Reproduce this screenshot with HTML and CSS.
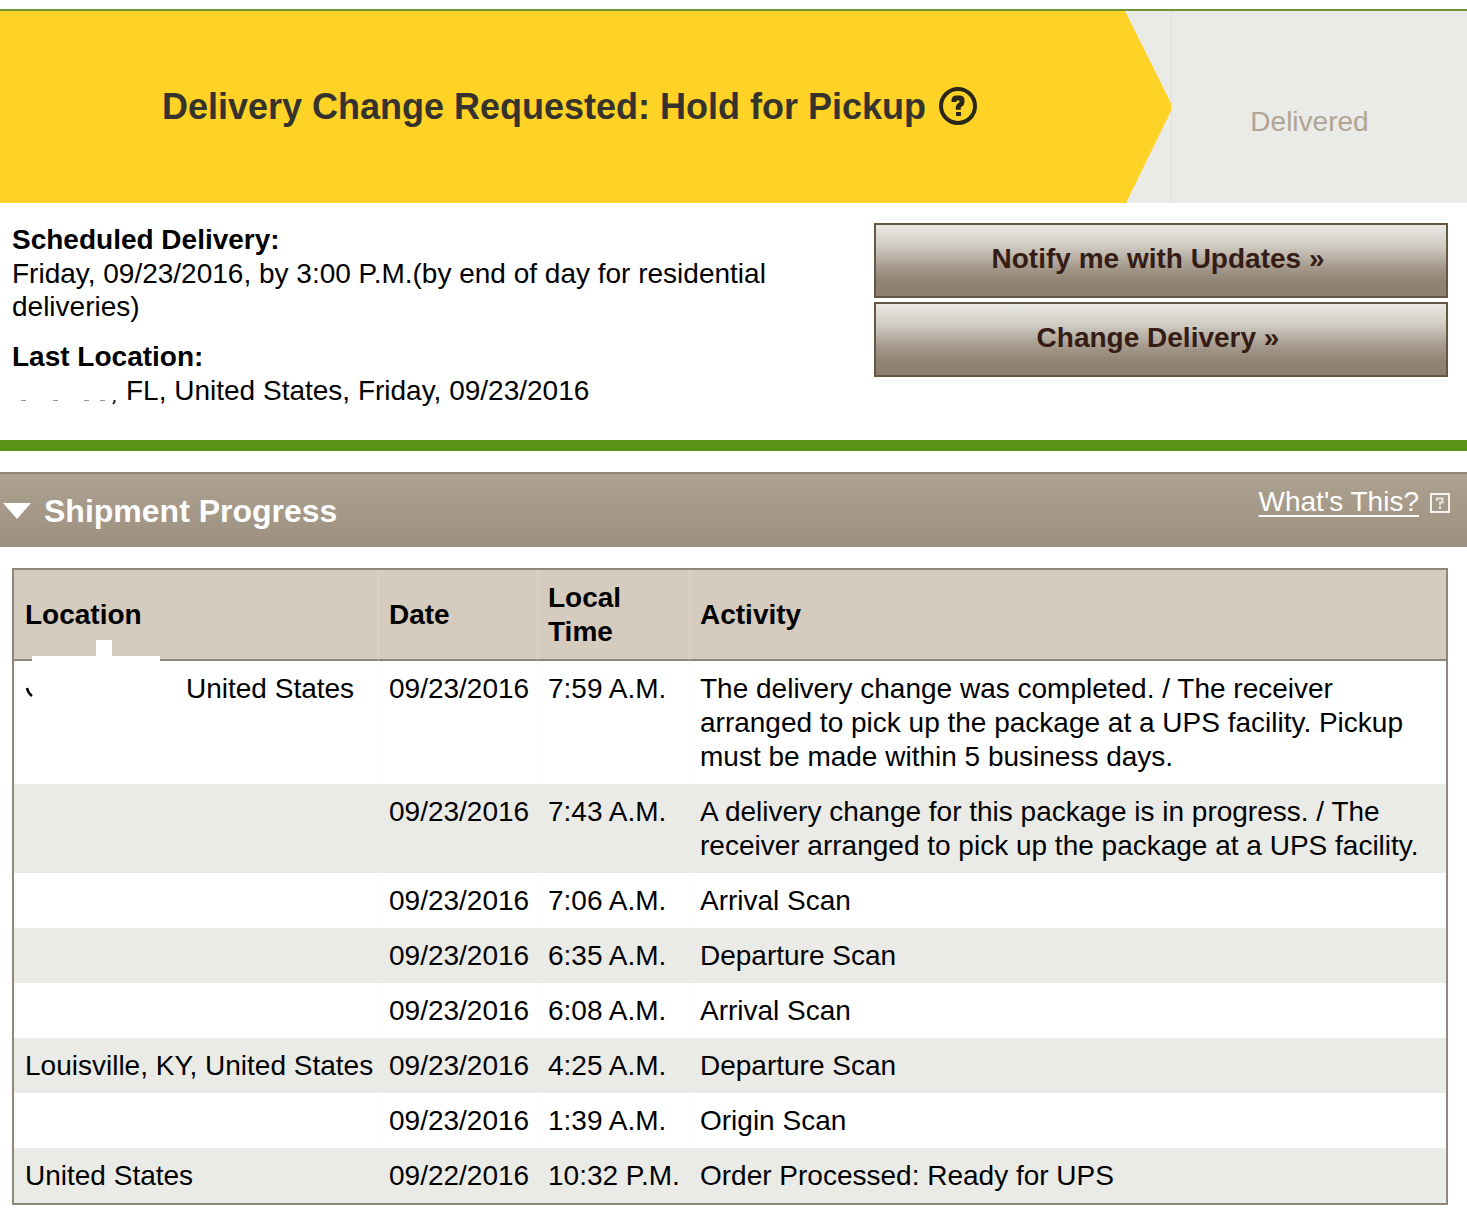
FILE: index.html
```html
<!DOCTYPE html>
<html lang="en">
<head>
<meta charset="utf-8">
<meta name="viewport" content="width=device-width, initial-scale=1">
<title>Tracking Detail</title>
<link rel="stylesheet" href="styles.css">
</head>
<body>
<main>
  <section class="status">
    <div class="status-current">
      <h1 class="status-title">Delivery Change Requested: Hold for Pickup</h1>
      <button class="help" type="button" aria-label="Help">
        <svg viewBox="0 0 38 38" width="38" height="38" aria-hidden="true">
          <circle cx="19" cy="19" r="17" fill="none" stroke="#2b2718" stroke-width="4"/>
          <path d="M15 15v-1.500q0-2.500 2.500-2.500h3q2.500 0 2.500 2.500v1.500q0 1.500-1.500 2.500l-1 .8q-1.200.8-1.200 2v2.500" fill="none" stroke="#2b2718" stroke-width="5"/>
          <rect x="17" y="25" width="5" height="4" fill="#2b2718"/>
        </svg>
      </button>
    </div>
    <div class="status-next">Delivered</div>
  </section>

  <section class="summary">
    <dl class="facts">
      <dt>Scheduled Delivery:</dt>
      <dd>Friday, 09/23/2016, by 3:00 P.M.(by end of day for residential deliveries)</dd>
      <dt>Last Location:</dt>
      <dd class="last-location">
        <svg class="city" viewBox="0 0 114 33" width="114" height="33" aria-hidden="true">
          <path d="M9 26.500h5M41 26.500h5M72 26.500h5M88 26.500h5" stroke="#999" stroke-width="1"/>
          <path d="M102.500 26v2l-1.500 2" fill="none" stroke="#222" stroke-width="2"/>
        </svg>
        <span>FL, United States, Friday, 09/23/2016</span>
      </dd>
    </dl>
    <div class="actions">
      <button class="action" type="button">Notify me with Updates »</button>
      <button class="action" type="button">Change Delivery »</button>
    </div>
  </section>

  <section class="progress">
    <header class="progress-bar">
      <svg class="caret" viewBox="0 0 30 16" width="30" height="16" aria-hidden="true"><path d="M1 0h28L15 16z" fill="#fff"/></svg>
      <h2 class="progress-title">Shipment Progress</h2>
      <a class="whats-this" href="#">What's This?</a>
      <svg class="hint" viewBox="0 0 20 20" width="20" height="20" aria-hidden="true">
        <rect x="1" y="1" width="18" height="18" fill="none" stroke="#f5f2ee" stroke-width="2"/>
        <path d="M7 8V5.500h5.500v4H10V12" fill="none" stroke="#e8e3dc" stroke-width="2"/>
        <rect x="9" y="13" width="2" height="3" fill="#e8e3dc"/>
      </svg>
    </header>

    <div class="table-wrap">
      <table class="scans">
        <colgroup><col class="col-location"><col class="col-date"><col class="col-time"><col></colgroup>
        <thead>
          <tr><th scope="col">Location</th><th scope="col">Date</th><th scope="col">Local Time</th><th scope="col">Activity</th></tr>
        </thead>
        <tbody>
          <tr>
            <td class="masked">
              <svg class="mask" viewBox="0 0 136 64" width="136" height="64" aria-hidden="true">
                <path d="M72 0h16v16h48v48H8V16h64z" fill="#fff"/>
                <path d="M3 48q1 5 5 8" fill="none" stroke="#000" stroke-width="2.500"/>
              </svg>
              <span>United States</span>
            </td>
            <td>09/23/2016</td><td>7:59 A.M.</td>
            <td>The delivery change was completed. / The receiver arranged to pick up the package at a UPS facility. Pickup must be made within 5 business days.</td>
          </tr>
          <tr><td></td><td>09/23/2016</td><td>7:43 A.M.</td><td>A delivery change for this package is in progress. / The receiver arranged to pick up the package at a UPS facility.</td></tr>
          <tr><td></td><td>09/23/2016</td><td>7:06 A.M.</td><td>Arrival Scan</td></tr>
          <tr><td></td><td>09/23/2016</td><td>6:35 A.M.</td><td>Departure Scan</td></tr>
          <tr><td></td><td>09/23/2016</td><td>6:08 A.M.</td><td>Arrival Scan</td></tr>
          <tr><td>Louisville, KY, United States</td><td>09/23/2016</td><td>4:25 A.M.</td><td>Departure Scan</td></tr>
          <tr><td></td><td>09/23/2016</td><td>1:39 A.M.</td><td>Origin Scan</td></tr>
          <tr><td>United States</td><td>09/22/2016</td><td>10:32 P.M.</td><td>Order Processed: Ready for UPS</td></tr>
        </tbody>
      </table>
    </div>
  </section>
</main>
</body>
</html>
```
FILE: styles.css
```css
* { box-sizing: border-box; }

body {
  margin: 0;
  padding: 9px 0 14px;
  background: #fff;
  color: #000;
  font: 28px/34px "Liberation Sans", Arial, sans-serif;
}

h1, h2, dl, dd { margin: 0; }

button {
  font: inherit;
  cursor: pointer;
}

/* Status banner */
.status {
  display: grid;
  grid-template-columns: 1fr 296px;
  border-top: 2px solid #6f9636;
  background: #eaeae6;
}

.status-current {
  display: flex;
  align-items: center;
  justify-content: center;
  gap: 13px;
  min-height: 192px;
  padding-right: 32px;
  background: #ffd226;
  clip-path: polygon(0 0, calc(100% - 46px) 0, 100% 48%, 100% 52%, calc(100% - 45px) 100%, 0 100%);
}

.status-title {
  color: #35332b;
  font-size: 36px;
  line-height: 44px;
}

.help {
  display: flex;
  padding: 0 0 2px;
  border: 0;
  background: none;
}

.status-next {
  display: flex;
  align-items: center;
  justify-content: center;
  padding: 30px 20px 0 0;
  border-left: 1px solid #f3dfa4;
  color: #b0a494;
}

/* Delivery summary */
.summary {
  display: grid;
  grid-template-columns: 1fr 574px;
  gap: 100px;
  padding: 20px 19px 33px 12px;
  border-bottom: 11px solid #5a9216;
}

.facts { line-height: 33px; }
.facts dt {
  font-weight: bold;
  line-height: 34px;
}
.facts dd + dt { margin-top: 17px; }

.last-location { display: flex; }

.city { flex: none; }

.actions {
  display: flex;
  flex-direction: column;
  gap: 4px;
}

.action {
  height: 75px;
  padding: 0 6px 4px 0;
  border: 2px solid #665744;
  border-radius: 0;
  background: linear-gradient(#e9e8e2, #d2cec6 28%, #a4998c 60%, #918474 80%, #8d7e70);
  color: #351c15;
  font-weight: bold;
}

/* Shipment progress */
.progress-bar {
  display: flex;
  align-items: center;
  height: 75px;
  margin-top: 21px;
  padding: 0 17px 0 2px;
  border-top: 2px solid #8f8578;
  background: linear-gradient(#ada190, #9d9080);
  color: #fff;
}

.progress-title {
  flex: 1;
  margin-left: 12px;
  font-size: 32px;
  line-height: 36px;
}

.whats-this {
  padding-bottom: 18px;
  color: #fff;
  text-decoration-thickness: 2px;
  text-underline-offset: 4px;
}

.hint { margin: 0 0 16px 11px; }

.table-wrap { padding: 21px 19px 0 12px; }

.scans {
  width: 100%;
  border: 2px solid #90877b;
  border-spacing: 0;
  table-layout: fixed;
}

.col-location { width: 364px; }
.col-date { width: 159px; }
.col-time { width: 152px; }

.scans th,
.scans td {
  padding: 11px 4px 10px 10px;
  text-align: left;
  vertical-align: top;
}

.scans th:first-child,
.scans td:first-child { padding-left: 11px; }

.scans th {
  border-bottom: 2px solid #90877b;
  background: #d5ccbf;
  vertical-align: middle;
}

/* The heading breaks after "Local" */
.scans th:nth-child(3) { padding-right: 24px; }

.scans th + th { border-left: 1px solid #dcd4c9; }
.scans tr:nth-child(odd) td + td { border-left: 1px solid #fafafa; }
.scans tr:nth-child(even) td + td { border-left: 1px solid #eaeae6; }
.scans tr:nth-child(even) td { background: #eaeae6; }

.scans td.masked {
  position: relative;
  padding-left: 172px;
}

/* Covers the city name and overlaps the header's lower edge */
.mask {
  position: absolute;
  top: -21px;
  left: 10px;
}
```
